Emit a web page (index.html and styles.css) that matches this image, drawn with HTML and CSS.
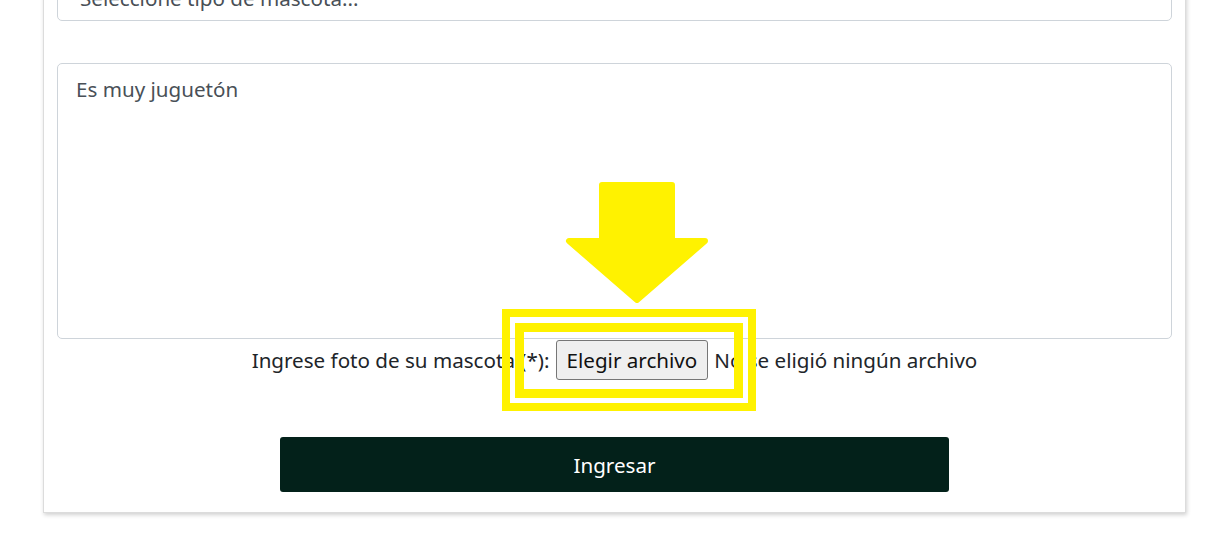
FILE: index.html
```html
<!DOCTYPE html>
<html lang="es">
<head>
<meta charset="utf-8">
<title>Ingresar mascota</title>
<link rel="stylesheet" href="styles.css">
</head>
<body>
<div class="card">
  <div class="field select-field">
    <div class="select">Seleccione tipo de mascota...</div>
  </div>
  <div class="field">
    <div class="textarea">Es muy juguetón</div>
  </div>
  <div class="file-row">
    <span class="file-label">Ingrese foto de su mascota (*):</span>
    <span class="file-btn">Elegir archivo</span>
    <span class="file-status">No se eligió ningún archivo</span>
  </div>
  <div class="submit-row">
    <button class="submit" type="button">Ingresar</button>
  </div>
</div>
<svg class="annot" width="1225" height="558" viewBox="0 0 1225 558" aria-hidden="true">
  <path d="M602,185 L672,185 L672,241 L705,241 L637,300 L569,241 L602,241 Z" fill="#fff200" stroke="#fff200" stroke-width="6" stroke-linejoin="round"/>
  <rect x="506" y="313" width="246" height="94" fill="none" stroke="#fff200" stroke-width="8"/>
  <rect x="519.5" y="327.5" width="219" height="66" fill="none" stroke="#fff200" stroke-width="9"/>
</svg>
</body>
</html>
```
FILE: styles.css
```css
html, body {
  margin: 0;
  padding: 0;
  background: #ffffff;
}
body {
  font-family: "Noto Sans", "Open Sans", "Liberation Sans", sans-serif;
  font-size: 20.6px;
  color: #212529;
  width: 1225px;
  height: 558px;
  overflow: hidden;
  position: relative;
}
.card {
  margin: -60px 0 0 43px;
  width: 1143px;
  box-sizing: border-box;
  background: #fff;
  border: 1px solid #dcdcdc;
  border-top: none;
  box-shadow: 1px 2px 4px rgba(0,0,0,0.18);
  padding: 0 13px 20px 13px;
}
.field + .field {
  margin-top: 42px;
}
.select {
  box-sizing: border-box;
  height: 81px;
  border: 1px solid #ced4da;
  border-radius: 5px;
  padding: 42px 22px 0 22px;
  color: #495057;
  line-height: 30px;
}
.textarea {
  box-sizing: border-box;
  height: 276px;
  border: 1px solid #ced4da;
  border-radius: 5px;
  padding: 10px 18px;
  color: #495057;
  line-height: 30px;
}
.file-row {
  display: flex;
  justify-content: center;
  align-items: center;
  gap: 6px;
  margin-top: 0;
  height: 42px;
}
.file-btn {
  box-sizing: border-box;
  height: 40px;
  padding: 0 10px;
  display: inline-flex;
  align-items: center;
  background: #efefef;
  border: 1px solid #767676;
  border-radius: 3px;
  color: #111;
}
.submit-row {
  display: flex;
  justify-content: center;
  margin-top: 56px;
}
.submit {
  width: 669px;
  height: 55px;
  background: #03211a;
  color: #ffffff;
  border: none;
  border-radius: 3px;
  font-family: inherit;
  font-size: 20.6px;
}
.annot {
  position: absolute;
  left: 0;
  top: 0;
  pointer-events: none;
}
```
